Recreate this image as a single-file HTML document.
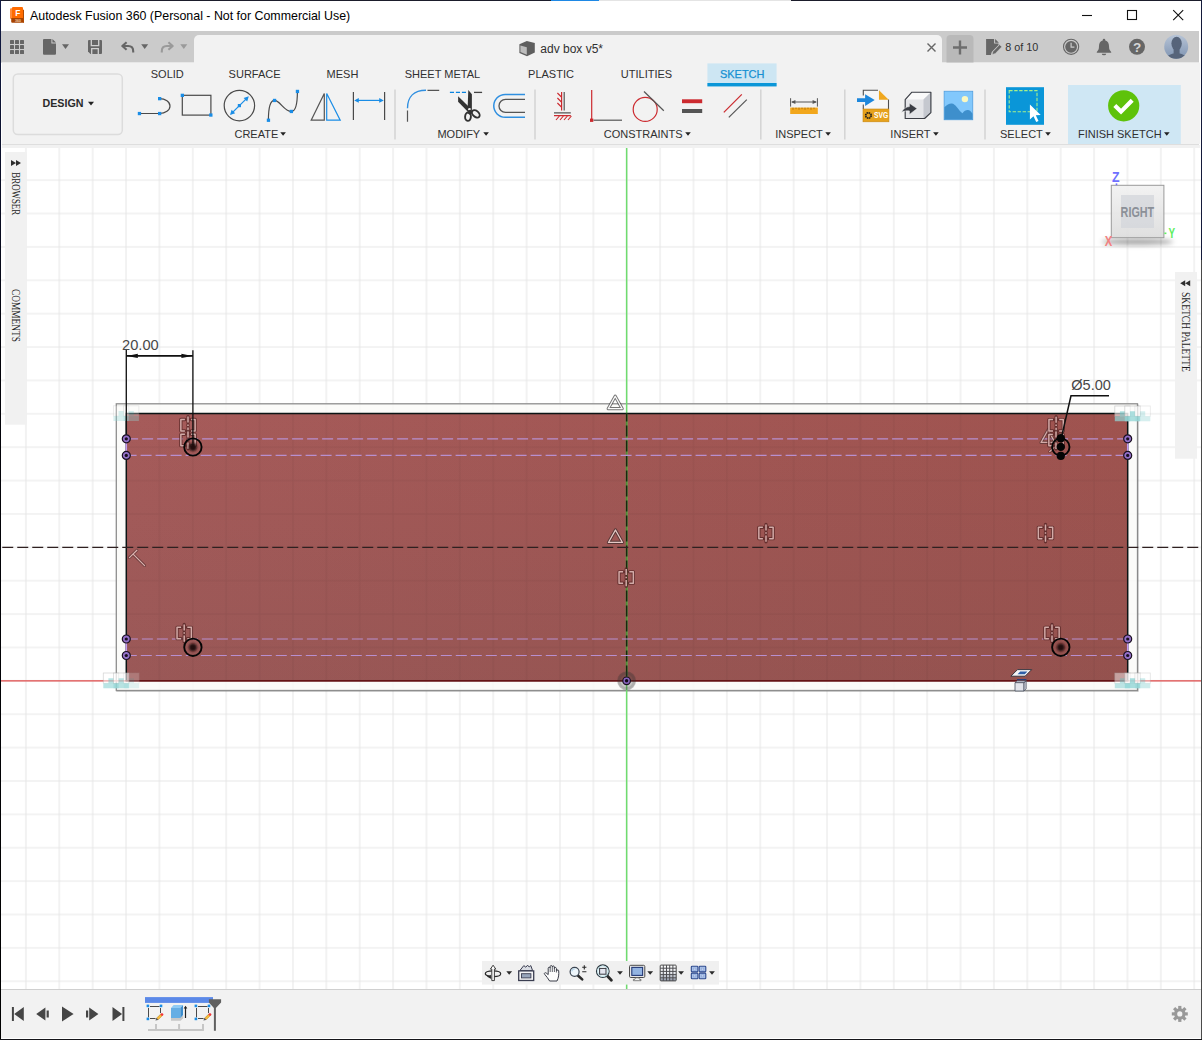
<!DOCTYPE html>
<html lang="en">
<head>
<meta charset="utf-8">
<title>Autodesk Fusion 360 (Personal - Not for Commercial Use)</title>
<style>
html,body{margin:0;padding:0;background:#fff;}
body{width:1202px;height:1040px;overflow:hidden;position:relative;font-family:"Liberation Sans",sans-serif;}
svg{position:absolute;left:0;top:0;display:block;}
text{font-family:"Liberation Sans",sans-serif;}
.t11{font-size:11px;fill:#303030;}
.t12{font-size:12px;fill:#303030;}
.ser{font-family:"Liberation Serif",serif;}
</style>
</head>
<body>
<svg width="1202" height="1040" viewBox="0 0 1202 1040">
<!-- ===== window chrome ===== -->
<g id="chrome">
  <rect x="0" y="0" width="1202" height="1040" fill="#ffffff"/>
  <!-- title bar -->
  <rect x="1" y="1" width="1200" height="30" fill="#ffffff"/>
  <!-- quick access bar -->
  <rect x="1" y="31" width="1198" height="31.6" fill="#cbcbcb"/>
  <!-- toolbar background -->
  <rect x="2" y="62.6" width="1198" height="81.4" fill="#f2f2f2"/>
  <rect x="2" y="144" width="1197" height="1" fill="#dedede"/>
  <rect x="2" y="145" width="1198" height="3" fill="#f1f1f1"/>
  <!-- active document tab -->
  <path d="M194 63V40a5 5 0 0 1 5-5H937a5 5 0 0 1 5 5V63Z" fill="#f2f2f2"/>
  <!-- plus tab -->
  <path d="M946.5 62.6V39a4 4 0 0 1 4-4H969.5a4 4 0 0 1 4 4V62.6Z" fill="#b9b9b9"/>
  <path d="M953 47.5H967M960 40.5V54.5" stroke="#6e6e6e" stroke-width="2.4" fill="none"/>
  <!-- bottom bar -->
  <rect x="1" y="989" width="1200" height="49" fill="#f2f2f2"/>
  <rect x="1" y="989" width="1200" height="1" fill="#cfcfcf"/>
  <!-- title text -->
  <text x="30" y="19.5" font-size="12.4" fill="#000">Autodesk Fusion 360 (Personal - Not for Commercial Use)</text>
</g>
<!-- ===== quick access + toolbar ===== -->
<g id="quick" fill="#666">
  <!-- app grid -->
  <g>
    <rect x="10" y="40" width="4" height="4" rx="0.6"/><rect x="15" y="40" width="4" height="4" rx="0.6"/><rect x="20" y="40" width="4" height="4" rx="0.6"/>
    <rect x="10" y="45" width="4" height="4" rx="0.6"/><rect x="15" y="45" width="4" height="4" rx="0.6"/><rect x="20" y="45" width="4" height="4" rx="0.6"/>
    <rect x="10" y="50" width="4" height="4" rx="0.6"/><rect x="15" y="50" width="4" height="4" rx="0.6"/><rect x="20" y="50" width="4" height="4" rx="0.6"/>
  </g>
  <!-- new doc -->
  <path d="M44 39h7.4v4.6h4.6v10.2a1 1 0 0 1-1 1h-11a1 1 0 0 1-1-1v-13.8a1 1 0 0 1 1-1zM52.4 39l3.6 3.6h-3.6z"/>
  <path d="M62 44.2h7l-3.5 4.8z"/>
  <!-- save -->
  <path d="M89 40h12a1 1 0 0 1 1 1v12a1 1 0 0 1-1 1h-10.5l-2.500-2.500v-10.500a1 1 0 0 1 1-1z"/>
  <path d="M91.300 40v5.600h7.400v-5.600M91.700 54v-5.300h6.600v5.300" fill="none" stroke="#d0d0d0" stroke-width="1.300"/>
  <!-- undo -->
  <path d="M126.600 42.200l-4.300 3.800 4.300 3.800M122.800 46h5.400q5 0 5 5.200v1.300" fill="none" stroke="#666" stroke-width="2.100" stroke-linejoin="round" stroke-linecap="butt"/>
  <path d="M141.200 44.200h7l-3.500 4.800z"/>
  <!-- redo -->
  <path d="M168.400 42.200l4.300 3.800-4.300 3.800M172.200 46h-5.400q-5 0-5 5.200v1.300" fill="none" stroke="#9a9a9a" stroke-width="2.100" stroke-linejoin="round"/>
  <path d="M180.300 44.200h7l-3.500 4.800z" fill="#9a9a9a"/>
</g>
<g id="doctab">
  <!-- cube icon -->
  <path d="M519.400 44.300l7.400-3.200 8 2v9.400l-7.800 3.800-7.600-3.400z" fill="#5f5f5f"/>
  <path d="M520.400 45.600l6.400 1.600v7.600l-6.400-2.800z" fill="#bdbdbd"/>
  <text x="540.300" y="53" class="t12">adv box v5*</text>
  <path d="M927.500 43.500l8 8M935.500 43.500l-8 8" stroke="#666" stroke-width="1.400" fill="none"/>
  <!-- job status -->
  <path d="M986.100 39h8l0 4.600h4.400v1.400l-6.800 7-0.800 3h-4.800z" fill="#666"/>
  <path d="M995.100 39l3.800 3.800h-3.800z" fill="#666"/>
  <path d="M992 54.600l0.900-3.100 6.700-6.900 2.300 2.200-6.700 6.900z" fill="#666" stroke="#cbcbcb" stroke-width="0.700"/>
  <text x="1005.200" y="50.700" font-size="10.800" fill="#303030">8 of 10</text>
  <!-- clock -->
  <circle cx="1071.100" cy="46.800" r="7.600" fill="none" stroke="#666" stroke-width="1.100"/>
  <circle cx="1071.100" cy="46.800" r="5.900" fill="#666"/>
  <path d="M1071.100 42.800v4.300h3.300" stroke="#cbcbcb" stroke-width="1.200" fill="none"/>
  <!-- bell -->
  <path d="M1104 38.800a1.300 1.300 0 0 1 1.300 1.300v0.500c2.600 0.800 3.700 2.900 3.700 5.500 0 3.300 0.800 4.600 2.200 5.800v0.800h-14.400v-0.800c1.400-1.200 2.200-2.500 2.200-5.800 0-2.600 1.100-4.700 3.700-5.500v-0.500a1.300 1.300 0 0 1 1.300-1.300z" fill="#666"/>
  <path d="M1101.800 53.700h4.400a2.200 1.600 0 0 1-4.400 0z" fill="#666"/>
  <!-- help -->
  <circle cx="1137" cy="46.800" r="8" fill="#666"/>
  <text x="1137" y="51.600" font-size="13.500" font-weight="700" fill="#d6d6d6" text-anchor="middle">?</text>
  <!-- avatar -->
  <defs>
    <linearGradient id="avg" x1="0" y1="0" x2="0" y2="1"><stop offset="0" stop-color="#b7c4d6"/><stop offset="1" stop-color="#7f94b2"/></linearGradient>
    <clipPath id="avc"><circle cx="1176.200" cy="46.800" r="12"/></clipPath>
  </defs>
  <circle cx="1176.200" cy="46.800" r="12" fill="url(#avg)"/>
  <g clip-path="url(#avc)" fill="#56647a">
    <ellipse cx="1176.600" cy="43.600" rx="5.200" ry="6.800"/>
    <path d="M1173.600 48h6v5.500c3.500 0.800 6.500 2 7.500 5.500h-21c1-3.500 4-4.700 7.500-5.500z"/>
  </g>
</g>
<!-- window controls -->
<g id="winctl" stroke="#111" stroke-width="1.100" fill="none">
  <path d="M1082 15.500h10"/>
  <rect x="1127.500" y="10.500" width="9" height="9"/>
  <path d="M1173.200 10.200l10 10M1183.200 10.200l-10 10"/>
</g>
<!-- app icon -->
<g id="appicon">
  <path d="M10 9.200a1 1 0 0 1 1-1h1.200v10.500h-2.200z" fill="#ff8c3c"/>
  <path d="M11.200 18h12.800v3.800a1 1 0 0 1-1 1h-10.800a1 1 0 0 1-1-1z" fill="#a84300"/>
  <path d="M23 9.700h1v13.100h-1z" fill="#b04a00"/>
  <path d="M12 8a1 1 0 0 1 1-1h9a1 1 0 0 1 1 1v10h-11z" fill="#ff6b00"/>
  <text x="17.900" y="15.800" font-size="8.300" font-weight="700" fill="#fff" text-anchor="middle">F</text>
  <text x="17.900" y="21.500" font-size="3.600" font-weight="700" fill="#edc9b2" text-anchor="middle">360</text>
</g>
<!-- ===== main toolbar ===== -->
<g id="maintb">
  <!-- workspace button -->
  <rect x="13.300" y="73.900" width="109" height="60.600" rx="4.500" fill="#f2f2f2" stroke="#dcdcdc" stroke-width="1.500"/>
  <text x="42.500" y="107" font-size="10.700" font-weight="700" fill="#2b2b2b">DESIGN</text>
  <path d="M88 101.800h6l-3 3.600z" fill="#222"/>
  <!-- tabs -->
  <g class="t11" text-anchor="middle">
    <text x="167.300" y="78">SOLID</text>
    <text x="254.600" y="78">SURFACE</text>
    <text x="342.500" y="78">MESH</text>
    <text x="442.400" y="78">SHEET METAL</text>
    <text x="551" y="78">PLASTIC</text>
    <text x="646.500" y="78">UTILITIES</text>
  </g>
  <rect x="707.400" y="63.400" width="69.200" height="23" fill="#cde6f3"/>
  <rect x="707.400" y="83" width="69.200" height="3.400" fill="#0a96d8"/>
  <text x="742.200" y="78" font-size="11" fill="#1590d2" text-anchor="middle" stroke="#1590d2" stroke-width="0.250">SKETCH</text>
  <!-- separators -->
  <path d="M395 89.500v50M535 89.500v50M760.800 89.500v50M844.800 89.500v50M985 89.500v50" stroke="#d4d4d4" stroke-width="1.500" fill="none"/>
  <!-- finish sketch highlight -->
  <rect x="1068" y="85" width="112.800" height="59" fill="#cfe7f4"/>
  <!-- group labels -->
  <g class="t11" text-anchor="middle">
    <text x="256.400" y="138">CREATE</text>
    <text x="458.800" y="138">MODIFY</text>
    <text x="643.200" y="138">CONSTRAINTS</text>
    <text x="799" y="138">INSPECT</text>
    <text x="910.400" y="138">INSERT</text>
    <text x="1021.400" y="138">SELECT</text>
    <text x="1119.800" y="138">FINISH SKETCH</text>
  </g>
  <g fill="#222">
    <path d="M280.300 132.200h5.600l-2.800 3.600z"/>
    <path d="M483.300 132.200h5.600l-2.800 3.600z"/>
    <path d="M685.200 132.200h5.600l-2.800 3.600z"/>
    <path d="M825.300 132.200h5.600l-2.800 3.600z"/>
    <path d="M933.100 132.200h5.600l-2.800 3.600z"/>
    <path d="M1045.200 132.200h5.600l-2.800 3.600z"/>
    <path d="M1164 132.200h5.600l-2.800 3.600z"/>
  </g>
</g>
<!-- ===== toolbar icons ===== -->
<g id="tbicons" fill="none" stroke-linecap="butt">
  <!-- CREATE: line -->
  <path d="M139.400 113.500H159.600A10.400 7.450 0 0 0 159.600 98.600" stroke="#4a4a4a" stroke-width="1.200"/>
  <g fill="#1a8de6" stroke="none"><rect x="137.800" y="111.900" width="3.300" height="3.300"/><rect x="158" y="111.900" width="3.300" height="3.300"/><rect x="158" y="97" width="3.300" height="3.300"/></g>
  <!-- rectangle -->
  <rect x="182.300" y="95.300" width="28.600" height="19.800" stroke="#4a4a4a" stroke-width="1.200"/>
  <g fill="#1a8de6" stroke="none"><rect x="180.700" y="93.700" width="3.300" height="3.300"/><rect x="209.200" y="113.400" width="3.300" height="3.300"/></g>
  <!-- circle -->
  <circle cx="239.400" cy="105.600" r="15.200" stroke="#4a4a4a" stroke-width="1.200"/>
  <path d="M231.300 113.600L247.500 97.600" stroke="#1a8de6" stroke-width="1.300"/>
  <path d="M230 114.900l1.600-5.200 3.600 3.600zM248.800 96.300l-1.600 5.200-3.600-3.600z" fill="#1a8de6" stroke="none"/>
  <rect x="237.800" y="104" width="3.200" height="3.200" fill="#1a8de6" stroke="none"/>
  <!-- spline -->
  <path d="M268.400 120.200C268.400 108 270.500 100.400 274.500 100.400C280 100.400 284 111.400 291.300 111.400C295.500 111.400 297.400 103 297.400 91.400" stroke="#4a4a4a" stroke-width="1.200"/>
  <g fill="#1a8de6" stroke="none"><rect x="266.800" y="118.600" width="3.300" height="3.300"/><rect x="272.900" y="98.800" width="3.300" height="3.300"/><rect x="289.700" y="109.800" width="3.300" height="3.300"/><rect x="295.800" y="89.800" width="3.300" height="3.300"/></g>
  <!-- mirror -->
  <path d="M324.300 93.500V120.200H311.200Z" stroke="#555" stroke-width="1.200"/>
  <path d="M326.700 93.500V120.200H340.200Z" stroke="#1a8de6" stroke-width="1.200"/>
  <!-- sketch dimension -->
  <path d="M353.400 92V120M384.600 92V120" stroke="#4a4a4a" stroke-width="1.200"/>
  <path d="M356 100.400H382" stroke="#1a8de6" stroke-width="1.200"/>
  <path d="M354.200 100.400l4.600-2.300v4.600zM383.800 100.400l-4.600-2.300v4.600z" fill="#1a8de6" stroke="none"/>
  <!-- MODIFY: fillet -->
  <path d="M407.500 108.300C407.500 97 414 90.300 426 90.300" stroke="#2f8fe0" stroke-width="1.400"/>
  <path d="M427.500 90.300H439.200M407.500 110.600V121.800" stroke="#555" stroke-width="1.200"/>
  <!-- trim -->
  <path d="M449.900 92.400H466.200" stroke="#0a84e0" stroke-width="1.400" stroke-dasharray="4.100 1.900"/>
  <path d="M474 92.400H482.100" stroke="#444" stroke-width="1.300"/>
  <g stroke="none" fill="#333">
    <path d="M468.300 90l3.600 4.200v16.300l-3.200 1.200-1-5.200z"/>
    <path d="M458.100 96.200l10 9.800 2.600 3.800-2.600 2.200-10-10.300z"/>
  </g>
  <circle cx="469.500" cy="109.500" r="1.400" fill="#f2f2f2" stroke="none"/>
  <path d="M467.600 110.600l3.600-1 1.300 3-2 2.600-2.300-1.500z" fill="#333" stroke="none"/>
  <ellipse cx="468" cy="116.700" rx="2.900" ry="4.200" transform="rotate(4 468 116.700)" stroke="#333" stroke-width="1.900"/>
  <ellipse cx="475.800" cy="113.800" rx="4.500" ry="2.900" transform="rotate(42 475.800 113.800)" stroke="#333" stroke-width="1.900"/>
  <!-- offset -->
  <path d="M525 94.400H505.200A11.450 11.450 0 0 0 505.200 117.300H525" stroke="#2f8fe0" stroke-width="1.500"/>
  <path d="M525 99.400H505.500A6.500 6.500 0 0 0 505.500 112.400H525" stroke="#555" stroke-width="1.300"/>
  <!-- CONSTRAINTS: fix -->
  <path d="M561.600 92V110.600M554 115.600H570.800" stroke="#cc2a2f" stroke-width="1.200"/>
  <path d="M564.200 92V110.600M554 112.800H570.800" stroke="#555" stroke-width="1.200"/>
  <path d="M561.400 97l-4-4M561.400 102l-4-4M561.400 107l-4-4M559.400 116l-3.400 4M563.400 116l-3.400 4M567.400 116l-3.400 4M571.400 116l-3.400 4" stroke="#cc2a2f" stroke-width="1.100"/>
  <!-- coincident -->
  <path d="M591.700 90V119" stroke="#cc2a2f" stroke-width="1.200"/>
  <path d="M593.500 120.200H622" stroke="#555" stroke-width="1.200"/>
  <rect x="590" y="118.600" width="3.300" height="3.300" fill="#cc2a2f" stroke="none"/>
  <!-- tangent -->
  <circle cx="645.200" cy="109.400" r="12" stroke="#cc2a2f" stroke-width="1.200"/>
  <path d="M644 91.500L663.800 110.800" stroke="#555" stroke-width="1.200"/>
  <!-- equal -->
  <rect x="682" y="99.300" width="20.200" height="3.900" fill="#cc2a2f" stroke="none"/>
  <rect x="682" y="109" width="20.200" height="4" fill="#555" stroke="none"/>
  <!-- parallel -->
  <path d="M723.800 112.400L741.800 94.400" stroke="#cc2a2f" stroke-width="1.200"/>
  <path d="M728.800 117.400L746.800 99.600" stroke="#555" stroke-width="1.200"/>
  <!-- INSPECT: measure -->
  <path d="M790.600 98.200v8.400M817.400 98.200v8.400M792 102H816" stroke="#555" stroke-width="1"/>
  <path d="M791 102l4.400-2v4zM817 102l-4.400-2v4z" fill="#555" stroke="none"/>
  <rect x="790.200" y="107.600" width="27.600" height="6.400" fill="#f2a71c" stroke="none"/>
  <path d="M793 107.600v2.200M796 107.600v1.500M799 107.600v2.200M802 107.600v1.500M805 107.600v2.200M808 107.600v1.500M811 107.600v2.200M814 107.600v1.500" stroke="#9b5e07" stroke-width="0.700"/>
  <!-- INSERT: svg -->
  <path d="M863.300 109V90.200H878V99.600H888.500V109Z" fill="#f6f6f6" stroke="none"/>
  <path d="M863.300 95.500V90.200H878M888.500 99.600V109M863.300 104.500V109" stroke="#4f4f4f" stroke-width="1.100"/>
  <path d="M879 90.200l9.700 9.600h-9.700z" fill="#f0a81f" stroke="none"/>
  <rect x="863" y="109" width="25.900" height="12.800" fill="#e6a21d" stroke="#c8870f" stroke-width="0.600"/>
  <path d="M857 98.200h8.100v-4l9.600 5.900-9.600 5.900v-4h-8.100z" fill="#1d87dc" stroke="none"/>
  <circle cx="868.400" cy="115.500" r="3" stroke="#1c1c1c" stroke-width="1.100" stroke-dasharray="1.500 0.850"/>
  <circle cx="868.400" cy="115.500" r="2.300" stroke="#1c1c1c" stroke-width="0.700"/>
  <text x="874" y="118.400" font-size="8.800" font-weight="700" fill="#fff" stroke="none" textLength="14.200" lengthAdjust="spacingAndGlyphs">SVG</text>
  <!-- insert derive cube -->
  <path d="M905.200 99.600l6.700-7.400h19v20.400l-6.300 5.900h-19.400z" fill="#e4e5e8" stroke="none"/>
  <path d="M905.200 99.600l6.700-7.400h19l-7.400 7.400z" fill="#fafafa" stroke="none"/>
  <path d="M923.500 99.600l7.400-7.400v20.400l-6.300 5.900h-1.100z" fill="#c5c8cf" stroke="none"/>
  <path d="M905.200 99.600l6.700-7.400h19v20.400l-6.300 5.900h-19.400z" stroke="#3a3d44" stroke-width="1.150" stroke-linejoin="round"/>
  <path d="M901.400 112.400c2.200-3.800 4.800-5.600 8-5.800v-3.400l7.700 5.400-7.700 5.800v-3.500c-3.200-0.200-5.600 0.200-8 1.500z" fill="#3a3d44" stroke="#f2f2f2" stroke-width="0.500"/>
  <!-- image -->
  <rect x="944.100" y="91.200" width="28.700" height="28.600" fill="#82c8fc" stroke="#4a98da" stroke-width="0.700"/>
  <path d="M944.400 119.500v-12.300c2.400-2.600 4.800-3.900 7.300-3.800 4 0.200 6.400 6.600 10.800 9.900 1.600-2.200 3.400-3.300 5.400-3.200 1.800 0.100 3.200 1.600 4.600 3.600v5.800z" fill="#3e8fcc" stroke="none"/>
  <circle cx="964.900" cy="99.100" r="3.200" fill="#fbf8c0" stroke="none"/>
  <!-- SELECT -->
  <rect x="1006" y="87.200" width="38" height="37.600" fill="#0a96d8" stroke="none"/>
  <rect x="1009.200" y="90.600" width="27.800" height="21.200" stroke="#a6f08a" stroke-width="1.100" stroke-dasharray="3.400 1.600"/>
  <path d="M1029.900 104.400v15.200l3.600-3.400 2.700 5.900 2.300-1-2.700-5.800 4.900-0.300z" fill="#fff" stroke="none"/>
  <!-- FINISH SKETCH -->
  <circle cx="1123.700" cy="105.800" r="15.600" fill="#5ec20a" stroke="none"/>
  <path d="M1114.800 105.600l6.200 6 11.200-11.400" stroke="#fff" stroke-width="4.200" stroke-linejoin="miter"/>
</g>
<!-- ===== canvas ===== -->
<defs>
  <pattern id="grid" x="610.06" y="664.15" width="33.38" height="33.38" patternUnits="userSpaceOnUse">
    <path d="M16.69 0V33.38M0 16.69H33.38" stroke="#000" stroke-opacity="0.095" stroke-width="1" fill="none"/>
  </pattern>
  <pattern id="gridred" x="610.06" y="664.15" width="33.38" height="33.38" patternUnits="userSpaceOnUse">
    <path d="M16.69 0V33.38M0 16.69H33.38" stroke="#000" stroke-opacity="0.06" stroke-width="1" fill="none"/>
  </pattern>
  <linearGradient id="redfill" x1="0" y1="0" x2="1" y2="0">
    <stop offset="0" stop-color="#a65b5a"/>
    <stop offset="1" stop-color="#9f534f"/>
  </linearGradient>
  <linearGradient id="redshade" x1="0" y1="0" x2="0" y2="1">
    <stop offset="0" stop-color="#694c4b" stop-opacity="0"/>
    <stop offset="1" stop-color="#694c4b" stop-opacity="0.2"/>
  </linearGradient>
  <linearGradient id="cubeg" x1="0" y1="0" x2="0" y2="1"><stop offset="0" stop-color="#f1f1f1"/><stop offset="1" stop-color="#dcdcdc"/></linearGradient>
  <clipPath id="cv"><rect x="1" y="148" width="1200" height="841"/></clipPath>
  <!-- symmetry constraint glyph, centred on 0,0 : 16 wide, 12 tall brackets -->
  <g id="sym">
    <path d="M-3.1 -5.7H-7.15V5.7H-3.1M3.1 -5.7H7.15V5.7H3.1M0 -8.6V-2.6M0 -0.8V0.8M0 2.4V8.8" fill="none" stroke="#562626" stroke-opacity="0.8" stroke-width="3.3" stroke-linejoin="round" stroke-linecap="round"/>
    <path d="M-3.1 -5.7H-7.15V5.7H-3.1M3.1 -5.7H7.15V5.7H3.1M0 -8.6V-2.6M0 -0.8V0.8M0 2.4V8.8" fill="none" stroke="#d3aba8" stroke-width="1.5" stroke-linejoin="round"/>
  </g>
  <!-- midpoint triangle glyph -->
  <g id="tri">
    <path d="M0 -6.25L7 6.25H-7Z" fill="none" stroke="#3c2b2b" stroke-opacity="0.72" stroke-width="3.2" stroke-linejoin="round"/>
    <path d="M0 -6.25L7 6.25H-7Z" fill="none" stroke="#e6c9c6" stroke-width="1.3" stroke-linejoin="round"/>
  </g>
  <g id="triw">
    <path d="M0 -6.25L7 6.25H-7Z" fill="none" stroke="#3a3a3a" stroke-opacity="0.7" stroke-width="3.2" stroke-linejoin="round"/>
    <path d="M0 -6.25L7 6.25H-7Z" fill="none" stroke="#fbfbfb" stroke-width="1.3" stroke-linejoin="round"/>
  </g>
  <!-- sketch point -->
  <g id="pt">
    <circle r="4" fill="#9470c8" stroke="#1a1020" stroke-width="1.2"/>
    <circle r="1.6" fill="#1a1020"/>
  </g>
  <!-- horizontal/vertical constraint sub-icon, centred on stub -->
  <g id="hv">
    <rect x="-7.7" y="0" width="15.4" height="10.3" fill="#ffffff" fill-opacity="0.66" stroke="#a8a8a8" stroke-opacity="0.6" stroke-width="0.8"/>
    <path d="M-7.7 10.3H-2.6V5.2H2.6V10.3H7.7V15.3H-7.7Z" fill="#93d6d6" fill-opacity="0.85"/>
  </g>
  <filter id="blur1" x="-50%" y="-50%" width="200%" height="200%"><feGaussianBlur stdDeviation="0.8"/></filter>
  <filter id="blur3" x="-50%" y="-100%" width="200%" height="300%"><feGaussianBlur stdDeviation="2.5"/></filter>
</defs>
<g id="canvas" clip-path="url(#cv)">
  <!-- grid -->
  <rect x="1" y="148" width="1200" height="841" fill="url(#grid)"/>
  <!-- body outline -->
  <rect x="116.3" y="403.8" width="1021.2" height="286.7" fill="#fafaf8" fill-opacity="0.8" stroke="#8e8e8e" stroke-width="1.3"/>
  <path d="M116.3 691.5H1138.3V404.5" fill="none" stroke="#4a4a4a" stroke-opacity="0.22" stroke-width="1"/>
  <!-- sketch profile -->
  <rect x="126.3" y="413.5" width="1001.4" height="267.3" fill="url(#redfill)"/>
  <rect x="126.3" y="413.5" width="1001.4" height="267.3" fill="url(#redshade)"/>
  <rect x="126.3" y="413.5" width="1001.4" height="267.3" fill="url(#gridred)"/>
  <!-- axes -->
  <path d="M626.65 148V989" stroke="#6fdc6f" stroke-width="1.5" fill="none"/>
  <path d="M1 680.8H126M1128 680.8H1201" stroke="#e04a4a" stroke-width="1.25" fill="none"/>
  <!-- rectangle outline -->
  <path d="M126.3 680.8V413.5H1127.7V680.8" fill="none" stroke="#0b1414" stroke-width="1.5"/>
  <path d="M125.6 680.8H1128.4" fill="none" stroke="#651316" stroke-width="1.8"/>
  <path d="M126.3 438.8V455.4M126.3 639V655.5M1127.7 438.8V455.4M1127.7 639V655.5" stroke="#c39af0" stroke-width="1.6" fill="none"/>
  <!-- centre construction lines -->
  <path d="M626.65 413.5V680.8" stroke="#4f8f35" stroke-width="1.5" fill="none"/>
  <path d="M626.65 413.5V680.8" stroke="#182810" stroke-width="1.5" stroke-dasharray="11 4" stroke-dashoffset="3" fill="none"/>
  <path d="M2 547.3H1201" stroke="#2f2020" stroke-width="1.3" stroke-dasharray="11 4" stroke-dashoffset="14.75" fill="none"/>
  <!-- purple construction lines -->
  <g stroke="#b88fcf" stroke-width="1.15" stroke-dasharray="11 4" fill="none">
    <path d="M126.3 438.8H1127.7" stroke-dashoffset="14.2"/>
    <path d="M126.3 455.4H1127.7" stroke-dashoffset="0.7"/>
    <path d="M126.3 639H1127.7" stroke-dashoffset="14.4"/>
    <path d="M126.3 655.5H1127.7" stroke-dashoffset="0.5"/>
  </g>
  <!-- constraint glyphs -->
  <use href="#sym" x="188" y="425.2"/>
  <use href="#sym" x="188" y="440"/>
  <use href="#sym" x="184.2" y="633"/>
  <use href="#sym" x="1052" y="633"/>
  <use href="#tri" x="1048" y="436.2" opacity="0.75"/>
  <path d="M1049.700 451.600L1055.500 446.400" fill="none" stroke="#562626" stroke-opacity="0.700" stroke-width="2.800" stroke-linecap="round"/>
  <path d="M1049.700 451.600L1055.500 446.400" fill="none" stroke="#d3aba8" stroke-width="1.300" stroke-linecap="round"/>
  <use href="#sym" x="1056.100" y="425.300"/>
  <use href="#sym" x="1056" y="440.100"/>
  <use href="#sym" x="766" y="533"/>
  <use href="#sym" x="1045.5" y="533"/>
  <use href="#sym" x="626.2" y="577.5"/>
  <use href="#tri" x="615.45" y="536.2"/>
  <path d="M129.400 557.600L136.900 550.300M133.400 554.400L144.600 565.600" fill="none" stroke="#4e2a2a" stroke-opacity="0.700" stroke-width="2.800" stroke-linecap="round"/>
  <path d="M129.400 557.600L136.900 550.300M133.400 554.400L144.600 565.600" fill="none" stroke="#dcb2af" stroke-width="1.300" stroke-linecap="round"/>
  <use href="#triw" x="615.2" y="402.45"/>
  <!-- corner clusters -->
  <use href="#hv" x="121.1" y="405.8" opacity="0.42"/>
  <use href="#hv" x="131.2" y="405.8" opacity="0.42"/>
  <use href="#hv" x="1122.5" y="406" opacity="0.85"/>
  <use href="#hv" x="1132.5" y="406" opacity="0.9"/>
  <use href="#hv" x="1142.6" y="406" opacity="0.45"/>
  <use href="#hv" x="111" y="673" opacity="0.75"/>
  <use href="#hv" x="121.2" y="673" opacity="0.75"/>
  <use href="#hv" x="131.4" y="673" opacity="0.3"/>
  <use href="#hv" x="1122.5" y="673" opacity="0.7"/>
  <use href="#hv" x="1132.5" y="673" opacity="0.95"/>
  <use href="#hv" x="1142.6" y="673" opacity="0.55"/>
  <!-- dimension 20.00 -->
  <g stroke="#111" stroke-width="1.3" fill="none">
    <path d="M126.3 349V438M192.9 350.3V447"/><path d="M126.3 355.9H192.9" stroke-width="1.7"/>
    <path d="M1061.2 438.5L1071 395.8H1109" stroke-width="1.5"/>
  </g>
  <path d="M126.8 355.9l11 -2.2v4.4zM192.4 355.9l-11 -2.2v4.4z" fill="#111"/>
  <text x="122.1" y="350" font-size="15.2" fill="#474747" textLength="36.6" lengthAdjust="spacingAndGlyphs">20.00</text>
  <text x="1071.3" y="389.8" font-size="15" fill="#474747" textLength="39.6" lengthAdjust="spacingAndGlyphs">Ø5.00</text>
  <!-- holes -->
  <g fill="none" stroke="#050505" stroke-width="1.85">
    <circle cx="192.9" cy="447" r="8.7"/>
    <circle cx="192.9" cy="647.3" r="8.7"/>
    <circle cx="1060.8" cy="447" r="8.7"/>
    <circle cx="1060.8" cy="647.3" r="8.7"/>
  </g>
  <g fill="#230b0c" filter="url(#blur1)">
    <circle cx="192.9" cy="447" r="3.9"/>
    <circle cx="192.9" cy="647.3" r="3.9"/>
    <circle cx="1060.8" cy="647.3" r="3.9"/>
  </g>
  <g fill="#050505">
    <circle cx="1060.8" cy="438.2" r="4.2"/>
    <circle cx="1060.8" cy="446.9" r="4.2"/>
    <circle cx="1060.8" cy="455.9" r="4.1"/>
  </g>
  <!-- sketch points -->
  <use href="#pt" x="126.3" y="438.8"/>
  <use href="#pt" x="126.3" y="455.4"/>
  <use href="#pt" x="126.3" y="639"/>
  <use href="#pt" x="126.3" y="655.5"/>
  <use href="#pt" x="1127.7" y="438.8"/>
  <use href="#pt" x="1127.7" y="455.4"/>
  <use href="#pt" x="1127.7" y="639"/>
  <use href="#pt" x="1127.7" y="655.5"/>
  <!-- origin -->
  <circle cx="626.6" cy="680.8" r="9.5" fill="#333" fill-opacity="0.26"/>
  <circle cx="626.6" cy="680.8" r="7.6" fill="none" stroke="#333" stroke-opacity="0.16" stroke-width="2.6"/>
  <circle cx="626.6" cy="680.8" r="3.8" fill="#8864bd" stroke="#1a1020" stroke-width="1.2"/>
  <circle cx="626.6" cy="680.8" r="1.7" fill="#120a18"/>
  <!-- side panels -->
  <rect x="5" y="152" width="21.8" height="272.7" fill="#f1f1f1"/>
  <path d="M11 160v6l5-3zM16 160v6l5-3z" fill="#2e2e2e"/>
  <text class="ser" transform="translate(11.9 172.3) rotate(90) scale(0.705 1)" font-size="12.6" fill="#1c1c1c">BROWSER</text>
  <text class="ser" transform="translate(11.9 289) rotate(90) scale(0.742 1)" font-size="12.6" fill="#1c1c1c">COMMENTS</text>
  <rect x="1175" y="272" width="22" height="186.7" fill="#f1f1f1"/>
  <path d="M1185.2 280.2v6l-5-3zM1190.2 280.2v6l-5-3z" fill="#2e2e2e"/>
  <text class="ser" transform="translate(1181.8 292) rotate(90) scale(0.756 1)" font-size="12.6" fill="#1c1c1c">SKETCH PALETTE</text>
  <!-- view cube -->
  <ellipse cx="1137.5" cy="241.8" rx="36" ry="3" fill="#000" fill-opacity="0.36" filter="url(#blur3)"/>
  <rect x="1111.3" y="185.3" width="52.6" height="52.4" fill="url(#cubeg)" fill-opacity="0.9" stroke="#9a9a9a" stroke-width="1"/>
  <rect x="1121" y="195" width="33" height="33" fill="#d3d6db" fill-opacity="0.75"/>
  <text transform="translate(1120.6 217) scale(0.702 1)" font-size="15.4" font-weight="700" fill="#8b9098">RIGHT</text>
  <text transform="translate(1112 182.3) scale(0.85 1)" font-size="14.6" font-weight="700" fill="#6f70ff">Z</text>
  <text transform="translate(1168.6 238.3) scale(0.68 1)" font-size="14.6" font-weight="700" fill="#5fee5f">Y</text>
  <text transform="translate(1104.8 246) scale(0.75 1)" font-size="15" font-weight="700" fill="#f38080">X</text>
  <path d="M1116.5 183.4v1.8" stroke="#6f70ff" stroke-width="1.6"/>
  <path d="M1164.4 233.3h2" stroke="#5fee5f" stroke-width="1.6"/>
  <!-- project glyph -->
  <g id="projglyph">
    <path d="M1017.5 669.6h14.2l-6.6 6.6h-14.2z" fill="#f4f4f6" stroke="#2a2a35" stroke-width="0.9"/>
    <path d="M1020.2 671.4h7.2l-2.6 2.8h-7.2z" fill="#2f5fa8"/>
    <path d="M1017 679.6h9.4" stroke="#2b3d7a" stroke-width="1.2"/>
    <path d="M1015 682.6h9v8.4h-9z" fill="#e2e4ea" stroke="#4a5060" stroke-width="0.8"/>
    <path d="M1015 682.6l2.2-1.8h9l-2.2 1.8zM1024 682.6l2.2-1.8v8l-2.2 2.2z" fill="#c6cad4" stroke="#4a5060" stroke-width="0.7"/>
  </g>
  <!-- navigation bar -->
  <rect x="482" y="961" width="237" height="23.600" fill="#f0f0f0"/>
  <g id="navicons">
    <g fill="#2a2a2a">
      <path d="M506.300 971.200h5.800l-2.900 3.600z"/>
      <path d="M617.100 971.200h5.800l-2.900 3.600z"/>
      <path d="M647.300 971.200h5.800l-2.900 3.600z"/>
      <path d="M678.200 971.200h5.800l-2.900 3.600z"/>
      <path d="M709.100 971.200h5.800l-2.900 3.600z"/>
    </g>
    <!-- orbit -->
    <path d="M489.200 976.200C486.600 975.600 485.300 974.700 485.300 973.700C485.300 972 488.700 970.800 493 970.800C497.300 970.800 500.700 972 500.700 973.700C500.700 975.300 497.600 976.500 493.600 976.600" fill="none" stroke="#2a2a2a" stroke-width="1.200"/>
    <path d="M486.800 976.400l4-1.700 0.400 4.300z" fill="#2a2a2a"/>
    <path d="M491.800 980.600v-11.500h-1.400l2.700-3.900 2.700 3.900h-1.400v11.500z" fill="#fbfbfb" stroke="#2a2a2a" stroke-width="0.900"/>
    <!-- look at -->
    <path d="M519.800 970.600l4-5 2 1.600 1.800-2 1.600 1.800 1.600-1.400 1.800 5z" fill="#d9dce3" stroke="#3a3d50" stroke-width="1"/>
    <rect x="518.700" y="970.900" width="15" height="9.600" fill="#f4f4f6" stroke="#3a3d50" stroke-width="1.300"/>
    <rect x="521.500" y="973.700" width="9.400" height="4.200" fill="#98a5bb" stroke="#3a3d50" stroke-width="0.900"/>
    <!-- pan hand -->
    <path d="M549.600 981c-1.400-2-3-4.800-5-6.800-0.800-0.900 0.400-2 1.600-1.200l2 1.600v-6.400c0-1.300 1.900-1.300 2 0v-1.600c0-1.400 2-1.400 2.100 0v0.400c0-1.400 2-1.400 2.100 0v1.400c0-1.300 1.900-1.300 2 0l0.400 2.400c0-1.200 1.800-1.200 1.900 0 0.300 3.400 0 6.800-1.700 10.200z" fill="#fdfdfd" stroke="#3a3d48" stroke-width="1" stroke-linejoin="round"/>
    <path d="M550.200 972v-3.800M552.300 972v-5M554.400 972v-4.600M556.400 972.500v-3.500" stroke="#3a3d48" stroke-width="0.800" fill="none"/>
    <!-- zoom -->
    <path d="M577.600 975.200l4.600 4.200" stroke="#2a2a2a" stroke-width="2.600" stroke-linecap="round" fill="none"/>
    <circle cx="574.600" cy="971.800" r="4.500" fill="#eef6fb" stroke="#3a4450" stroke-width="1.200"/>
    <path d="M571.800 971.400a3 3 0 0 1 3-2.600" stroke="#b7d6ea" stroke-width="1.200" fill="none"/>
    <path d="M582.200 967.300h4.200M584.300 965.200v4.200M582.200 971.800h4.200" stroke="#2a2a2a" stroke-width="1.100" fill="none"/>
    <!-- zoom window -->
    <path d="M607.400 976l4 4.200" stroke="#2a2a2a" stroke-width="2.800" stroke-linecap="round" fill="none"/>
    <circle cx="602.800" cy="971.200" r="6.300" fill="#fbfdfe" stroke="#2f3a42" stroke-width="1.200"/>
    <circle cx="602.800" cy="971.200" r="5.200" fill="none" stroke="#bfe0e8" stroke-width="1.100"/>
    <rect x="599.600" y="968.400" width="6.400" height="5.800" fill="#e4e6f0" stroke="#33363e" stroke-width="1"/>
    <!-- display settings -->
    <rect x="629.500" y="965.300" width="15.300" height="12.200" rx="1.200" fill="#e6e6e6" stroke="#4a4a4a" stroke-width="1"/>
    <rect x="631.800" y="967.400" width="10.800" height="8" fill="#93b4e2" stroke="#243a78" stroke-width="1.100"/>
    <path d="M635.600 977.800h3.200l0.800 1.600h1.400v1.300h-7.600v-1.300h1.400z" fill="#f6f6f6" stroke="#555" stroke-width="0.700"/>
    <!-- grid -->
    <defs><linearGradient id="gridg" x1="0" y1="0" x2="0" y2="1"><stop offset="0" stop-color="#ffffff"/><stop offset="0.500" stop-color="#e8eaee"/><stop offset="1" stop-color="#8d95a6"/></linearGradient></defs>
    <rect x="660.200" y="965.100" width="16" height="15.800" rx="0.800" fill="url(#gridg)" stroke="#4a4a4a" stroke-width="1"/>
    <path d="M663.300 965.100v15.800M666.500 965.100v15.800M669.700 965.100v15.800M672.900 965.100v15.800M660.200 968.200h16M660.200 971.400h16M660.200 974.600h16M660.200 977.800h16" stroke="#4e4e52" stroke-width="1" fill="none"/>
    <!-- viewports -->
    <g fill="#a9c1e8" stroke="#2e4a8e" stroke-width="1.100">
      <rect x="691.300" y="966.300" width="6.600" height="5.600" rx="0.800"/>
      <rect x="699.200" y="966.300" width="6.600" height="5.600" rx="0.800"/>
      <rect x="691.300" y="973.100" width="6.600" height="5.600" rx="0.800"/>
      <rect x="699.200" y="973.100" width="6.600" height="5.600" rx="0.800"/>
    </g>
    <g fill="#c9d8f2" stroke="#7f9bd0" stroke-width="0.500">
      <rect x="693.300" y="968.100" width="2.600" height="2"/><rect x="701.200" y="968.100" width="2.600" height="2"/>
      <rect x="693.300" y="974.900" width="2.600" height="2"/><rect x="701.200" y="974.900" width="2.600" height="2"/>
    </g>
  </g>
</g>
<!-- ===== bottom ===== -->
<g id="bottom">
  <!-- playback -->
  <g fill="#454545">
    <path d="M11.900 1007h2v14h-2zM23.800 1007v14l-9.600-7z"/>
    <path d="M46.600 1010.600h2.200v6.800h-2.200zM45.400 1007.400v13.200l-9.200-6.600z"/>
    <path d="M62 1006.600l11.600 7.400-11.600 7.400z"/>
    <path d="M86 1010.600h2.200v6.800h-2.200zM89.200 1007.400v13.200l9.200-6.600z"/>
    <path d="M122.400 1007h2v14h-2zM112.500 1007v14l9.600-7z"/>
  </g>
  <!-- timeline -->
  <rect x="145" y="997.100" width="68" height="5.800" fill="#5b89e8"/>
  <path d="M148 1030H203.900M156 1024.100v6M179.100 1024.100v6M203 1024.100v6" stroke="#c6c6c6" stroke-width="2" fill="none"/>
  <!-- sketch 1 -->
  <g id="tlsk">
    <path d="M150 1006.500H159.500M148.500 1008v9.400M160.500 1008v5M150 1018.500h5.500" stroke="#4a4a4a" stroke-width="1" fill="none"/>
    <rect x="146.600" y="1004.600" width="2.600" height="2.600" fill="#1a8de6"/><rect x="159.700" y="1004.600" width="2.600" height="2.600" fill="#1a8de6"/><rect x="146.600" y="1017.600" width="2.600" height="2.600" fill="#1a8de6"/>
    <path d="M155.400 1020.600l0.900-2.400 4.800-4.600 1.700 1.700-4.800 4.600z" fill="#5a5a5a"/>
    <path d="M156.600 1017.900l4.300-4.200 1.800 1.800-4.300 4.200z" fill="#f6b93b"/>
    <circle cx="162" cy="1014.500" r="1.350" fill="#f6323c"/>
  </g>
  <use href="#tlsk" x="48" y="0"/>
  <!-- extrude -->
  <path d="M171 1017.600h9.600l2.600-2.400v3l-2.600 2.600h-9.600z" fill="#c8c8c8"/>
  <path d="M171 1008h9.400v10h-9.400z" fill="#66aee4"/>
  <path d="M171 1008l2.600-3h9.400l-2.600 3z" fill="#8fcbf5"/>
  <path d="M180.400 1008l2.600-3v10l-2.600 3z" fill="#3c8ccc"/>
  <path d="M185.500 1018v-11" stroke="#222" stroke-width="1.200" fill="none"/>
  <path d="M183.700 1008.400l1.800-2.600 1.800 2.600z" fill="#222"/>
  <!-- marker -->
  <path d="M208.900 999.200h12.200v3.300l-5.200 5.400v22.900h-2v-22.900l-5-5.400z" fill="#606060"/>
  <!-- gear -->
  <g transform="translate(1179.800 1013.900)" fill="#999">
    <circle r="5.700"/>
    <g id="gt"><rect x="-1.600" y="-8" width="3.200" height="16"/></g>
    <use href="#gt" transform="rotate(45)"/>
    <use href="#gt" transform="rotate(90)"/>
    <use href="#gt" transform="rotate(135)"/>
    <circle r="2.600" fill="#f2f2f2"/>
  </g>
</g>
<!-- window borders -->
<g id="borders">
  <rect x="0" y="0" width="1202" height="1" fill="#1b1d2b"/>
  <rect x="551" y="0" width="48" height="1" fill="#1e88e5"/>
  <rect x="599" y="0" width="192" height="1" fill="#e4e4e4"/>
  <defs><linearGradient id="lb" x1="0" y1="0" x2="0" y2="1"><stop offset="0" stop-color="#111a44"/><stop offset="0.35" stop-color="#03030a"/><stop offset="1" stop-color="#000"/></linearGradient></defs>
  <rect x="0" y="0" width="1" height="1040" fill="url(#lb)"/>
  <rect x="1201" y="0" width="1" height="1040" fill="#4a4a4a"/>
  <rect x="1201" y="0" width="1" height="260" fill="#141a3a"/>
  <rect x="0" y="1039" width="1202" height="1" fill="#15151a"/>
</g>
</svg>
</body>
</html>
